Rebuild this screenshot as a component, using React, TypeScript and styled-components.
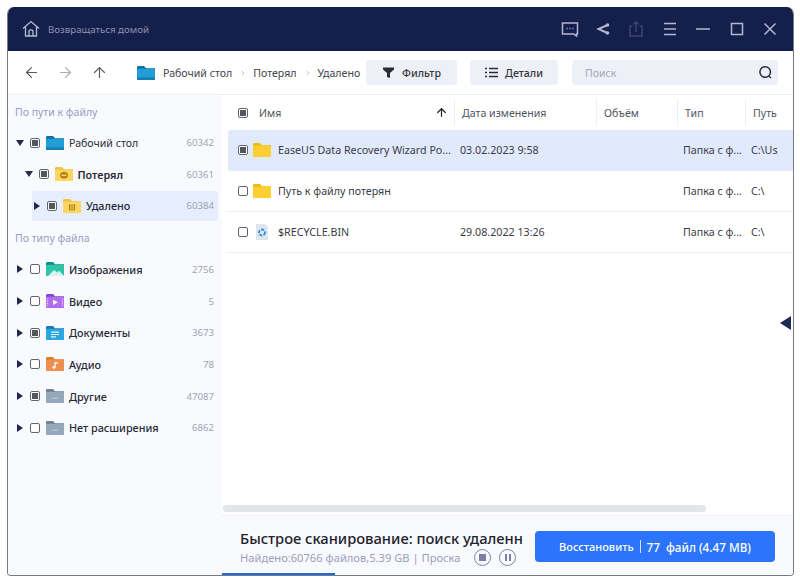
import styled, { createGlobalStyle } from 'styled-components';
import { ArrowLeft, ArrowRight, ArrowUp, ChevronRight } from 'lucide-react';

const GlobalStyle = createGlobalStyle`
  html, body {
    margin: 0;
    background: #fff;
    font-family: "Noto Sans", "Open Sans", sans-serif;
  }
  * { box-sizing: border-box; }
`;

const Window = styled.div`
  position: relative;
  width: 787px;
  height: 569px;
  margin: 7px 0 0 7px;
  display: flex;
  flex-direction: column;
  background: #fff;
  border: 1px solid #77797f;
  border-top: 0;
  border-radius: 7px 7px 4px 4px;
  overflow: hidden;
`;

const TitleBar = styled.header`
  height: 44px;
  flex: none;
  margin: 0 -1px;
  display: flex;
  align-items: center;
  justify-content: space-between;
  padding: 0 14px 0 15px;
  background: #151f4c;
`;

const HomeLink = styled.div`
  display: flex;
  align-items: center;
  gap: 8px;
  color: #8d92b3;
  font-size: 9.7px;
`;

const WindowTools = styled.div`
  display: flex;
  align-items: center;
  gap: 13.4px;
`;

const ToolIcon = styled.svg<{ $dim?: boolean; $bold?: boolean }>`
  width: 20px;
  height: 20px;
  fill: none;
  stroke: ${(p) => (p.$dim ? '#3d4670' : '#b3b7ce')};
  stroke-width: ${(p) => (p.$bold ? 2 : 1.5)};
  display: block;
`;

const Toolbar = styled.div`
  height: 44px;
  flex: none;
  display: flex;
  align-items: center;
  padding: 0 15px 0 15px;
  border-bottom: 1px solid #edeff5;
`;

const NavButtons = styled.div`
  display: flex;
  align-items: center;
  gap: 17px;
  margin-right: 29px;
`;

const NavArrow = styled.span<{ $off?: boolean }>`
  display: flex;
  color: ${(p) => (p.$off ? '#a9acb5' : '#555861')};
`;

const Crumbs = styled.div`
  display: flex;
  align-items: center;
  width: 229px;
  font-size: 10.6px;
  color: #41434d;
`;

const CrumbFolder = styled.span`
  display: flex;
  margin-right: 8px;
`;

const CrumbArrow = styled.span`
  display: flex;
  color: #a5a8b3;
  margin: 0 6px 0 7px;
`;

const ToolButton = styled.div<{ $w: number }>`
  width: ${(p) => p.$w}px;
  height: 25px;
  margin-right: 13px;
  display: flex;
  align-items: center;
  justify-content: center;
  gap: 7px;
  background: #eef0f8;
  border-radius: 4px;
  color: #33353f;
  font-size: 10.6px;
  font-weight: 500;
`;

const SearchBox = styled.div`
  width: 206px;
  height: 25px;
  margin-left: 1px;
  display: flex;
  align-items: center;
  justify-content: space-between;
  padding: 0 5px 0 13px;
  background: #eef0f8;
  border-radius: 4px;
  color: #a3a6b4;
  font-size: 10.5px;
`;

const Body = styled.div`
  flex: 1;
  min-height: 0;
  display: flex;
`;

const Sidebar = styled.aside`
  width: 214px;
  flex: none;
  padding: 7px 0 0 0;
  background: #f9fafe;
`;

const SideLabel = styled.div`
  height: 20px;
  margin: 0 0 0 7px;
  display: flex;
  align-items: center;
  color: #9a9cc0;
  font-size: 10.5px;
`;

const TreeList = styled.div`
  display: flex;
  flex-direction: column;
  margin: 5px 0 6px;
`;

const TypeList = styled(TreeList)`
  margin-top: 6px;
`;

const TreeRow = styled.div<{ $level: number; $active?: boolean; $h: number }>`
  position: relative;
  height: ${(p) => p.$h}px;
  display: flex;
  align-items: center;
  margin-right: 4px;
  padding-left: ${(p) => 8 + p.$level * 8.5}px;
  padding-right: 3px;
  color: #272a36;
  &::before {
    content: '';
    display: ${(p) => (p.$active ? 'block' : 'none')};
    position: absolute;
    left: 24px;
    right: 0;
    top: 1px;
    bottom: 1px;
    background: #e6edfd;
    border-radius: 3px;
  }
  & > * { position: relative; }
`;

const TreeName = styled.span<{ $weight: number }>`
  font-size: ${(p) => (p.$weight === 400 ? 10.6 : 10.8)}px;
  font-weight: ${(p) => p.$weight};
`;

const Caret = styled.span<{ $open?: boolean }>`
  width: 0;
  height: 0;
  margin-right: 6px;
  margin-left: ${(p) => (p.$open ? '0' : '1px')};
  ${(p) =>
    p.$open
      ? `border-left: 4px solid transparent;
         border-right: 4px solid transparent;
         border-top: 6px solid #1f2a4f;`
      : `border-top: 4px solid transparent;
         border-bottom: 4px solid transparent;
         border-left: 6px solid #1f2a4f;
         margin-right: 7px;`}
`;

const Check = styled.span<{ $on?: boolean }>`
  width: 10px;
  height: 10px;
  flex: none;
  display: flex;
  align-items: center;
  justify-content: center;
  background: #fff;
  border: 1px solid #63656e;
  border-radius: 2px;
  &::after {
    content: '';
    display: ${(p) => (p.$on ? 'block' : 'none')};
    width: 6px;
    height: 6px;
    background: #55575f;
  }
`;

const TreeIcon = styled.span`
  display: flex;
  margin: 0 5px 0 6px;
`;

const Count = styled.span`
  margin-left: auto;
  padding-right: 1px;
  color: #a0a3b2;
  font-size: 9.6px;
`;

const Main = styled.main`
  flex: 1;
  min-width: 0;
  display: flex;
  flex-direction: column;
`;

const Table = styled.div`
  flex: 1;
  min-height: 0;
  padding-left: 6px;
  overflow: hidden;
`;

const HeaderRow = styled.div`
  height: 35px;
  display: grid;
  grid-template-columns: 227px 142px 81px 68px 33px;
  color: #51535e;
  font-size: 10.6px;
`;

const HeadCell = styled.div`
  display: flex;
  align-items: center;
  justify-content: space-between;
  padding: 0 6px 0 7px;
  border-right: 1px solid #eef0f4;
  margin: 4px 0;
  white-space: nowrap;
  &:last-child { border-right: 0; padding-right: 0; }
`;

const NameHead = styled(HeadCell)`
  padding-left: 10px;
  padding-right: 6px;
`;

const NameLabel = styled.span`
  display: flex;
  align-items: center;
  gap: 11px;
`;

const DataRow = styled.div<{ $active?: boolean }>`
  height: 41px;
  display: grid;
  grid-template-columns: 227px 142px 81px 68px 33px;
  align-items: center;
  border-bottom: 1px solid ${(p) => (p.$active ? 'transparent' : '#edeff3')};
  background: ${(p) => (p.$active ? '#e1e9fd' : 'transparent')};
  border-radius: ${(p) => (p.$active ? '3px 0 0 3px' : '0')};
  color: #3a3c47;
  font-size: 10.7px;
  white-space: nowrap;
`;

const NameCell = styled.div`
  display: flex;
  align-items: center;
  padding-left: 10px;
  min-width: 0;
`;

const RowIcon = styled.span`
  display: flex;
  margin: 0 7px 0 5px;
`;

const RowName = styled.span`
  overflow: hidden;
  text-overflow: ellipsis;
`;

const Cell = styled.div`
  padding-left: 5px;
  overflow: hidden;
`;

const HScroll = styled.div`
  height: 7px;
  flex: none;
  width: 483px;
  margin: 0 0 3px 1px;
  background: #e2e5e9;
  border-radius: 4px;
`;

const Footer = styled.footer`
  position: relative;
  height: 60px;
  flex: none;
  display: flex;
  align-items: flex-start;
  padding: 15px 18px 0 18px;
  background: #f9fafe;
  border-top: 1px solid #edeff5;
`;

const ScanInfo = styled.div`
  width: 295px;
  flex: none;
`;

const ScanTitle = styled.div`
  color: #20222c;
  font-size: 14.7px;
  font-weight: 500;
  line-height: 14px;
  white-space: nowrap;
`;

const ScanMeta = styled.div`
  display: flex;
  align-items: center;
  margin-top: 4px;
  color: #9b9eb8;
  font-size: 11.15px;
  white-space: nowrap;
`;

const MetaText = styled.span`
  width: 234px;
  overflow: hidden;
`;

const RoundButton = styled.span`
  width: 17px;
  height: 17px;
  margin: 0 8px 0 0;
  flex: none;
  display: flex;
  align-items: center;
  justify-content: center;
  gap: 2px;
  border: 1px solid #7d80a6;
  border-radius: 50%;
`;

const StopMark = styled.span`
  width: 7px;
  height: 7px;
  background: #7d80a6;
`;

const PauseMark = styled.span`
  width: 2px;
  height: 7px;
  background: #7d80a6;
`;

const RecoverButton = styled.button`
  width: 240px;
  height: 31px;
  flex: none;
  display: flex;
  align-items: center;
  justify-content: center;
  gap: 6px;
  border: 0;
  border-radius: 4px;
  background: #2b74fb;
  color: #fff;
  font-family: inherit;
  font-size: 11px;
  font-weight: 500;
`;

const ButtonDivider = styled.span`
  width: 1px;
  height: 13px;
  background: #d5e3ff;
`;

const ButtonCount = styled.span`
  font-size: 11.7px;
`;

const Progress = styled.div`
  position: absolute;
  left: 0;
  bottom: 0;
  width: 113px;
  height: 2px;
  background: #1f68e0;
`;

const CollapseHandle = styled.span`
  position: absolute;
  right: 2px;
  top: 309px;
  width: 0;
  height: 0;
  border-top: 7px solid transparent;
  border-bottom: 7px solid transparent;
  border-right: 11px solid #1d2a52;
`;

function FolderGlyph({ kind }: { kind: string }) {
  const palette: Record<string, [string, string]> = {
    desktop: ['#0f6fa8', '#1f9fd6'],
    lost: ['#f0c24a', '#fbd660'],
    deleted: ['#f0c24a', '#fbd660'],
    image: ['#0f8f7f', '#2fc4a8'],
    video: ['#8a45d0', '#b26cf0'],
    docs: ['#1777b8', '#2ba6de'],
    audio: ['#d9822f', '#ee8f4f'],
    other: ['#6f7f96', '#96a8bd'],
    plain: ['#f2b90f', '#fdcf33'],
  };
  const [back, front] = palette[kind];
  return (
    <svg width="18" height="14" viewBox="0 0 18 16" preserveAspectRatio="none">
      <path d="M0 1.5C0 .7.7 0 1.5 0H7l2 2.5h9V5H0z" fill={back} />
      <rect x="0" y="3" width="18" height="13" rx="1" fill={front} />
      {kind === 'desktop' && <rect x="0" y="13" width="18" height="3" fill="#0d6397" opacity="0.55" />}
      {kind === 'lost' && (
        <>
          <circle cx="9" cy="9.5" r="4" fill="#b8860f" />
          <rect x="6.5" y="8.8" width="5" height="1.5" fill="#fbd660" />
        </>
      )}
      {kind === 'deleted' && (
        <path d="M5.5 7h7M6.5 7v5.500h5V7M8.200 8.500v2.500M9.800 8.500v2.500" stroke="#a9780c" strokeWidth="1" fill="none" />
      )}
      {kind === 'image' && <path d="M2 16l6-7 3 3 2-2 5 6z" fill="#d5f5ee" />}
      {kind === 'video' && (
        <>
          <path d="M7 6.500l5 3-5 3z" fill="#fff" />
          <path d="M1.500 5v9M16.500 5v9" stroke="#e4ccfb" strokeWidth="1.400" strokeDasharray="1.400 1.200" />
        </>
      )}
      {kind === 'docs' && <path d="M5 7h8M5 9.700h8M5 12.400h5" stroke="#e4f5fd" strokeWidth="1.300" />}
      {kind === 'audio' && (
        <>
          <path d="M9 6v6M9 6.200l3 .8" stroke="#fff" strokeWidth="1.300" fill="none" />
          <circle cx="7.800" cy="12" r="1.500" fill="#fff" />
        </>
      )}
      {kind === 'other' && <path d="M6 10.500h1.200M8.400 10.500h1.200M10.800 10.500H12" stroke="#e5ecf3" strokeWidth="1.200" />}
    </svg>
  );
}

function RecycleGlyph() {
  return (
    <svg width="18" height="18" viewBox="0 0 18 18">
      <path d="M3 1h9l3 3v13H3z" fill="#dfe5ec" />
      <circle cx="9" cy="9.500" r="3" fill="none" stroke="#2a8fdc" strokeWidth="1.800" strokeDasharray="3 1.300" />
    </svg>
  );
}

const pathTree = [
  { name: 'Рабочий стол', count: '60342', level: 0, kind: 'desktop', open: true, on: true, weight: 400 },
  { name: 'Потерял', count: '60361', level: 1, kind: 'lost', open: true, on: true, weight: 600 },
  { name: 'Удалено', count: '60384', level: 2, kind: 'deleted', on: true, active: true, weight: 500 },
];

const typeTree = [
  { name: 'Изображения', count: '2756', kind: 'image' },
  { name: 'Видео', count: '5', kind: 'video' },
  { name: 'Документы', count: '3673', kind: 'docs', on: true },
  { name: 'Аудио', count: '78', kind: 'audio' },
  { name: 'Другие', count: '47087', kind: 'other', on: true },
  { name: 'Нет расширения', count: '6862', kind: 'other' },
];

const files = [
  { name: 'EaseUS Data Recovery Wizard Po...', date: '03.02.2023 9:58', path: 'C:\\Us', on: true, kind: 'plain' },
  { name: 'Путь к файлу потерян', date: '', path: 'C:\\', kind: 'plain' },
  { name: '$RECYCLE.BIN', date: '29.08.2022 13:26', path: 'C:\\', kind: 'bin' },
];

export default function App() {
  return (
    <>
      <GlobalStyle />
      <Window>
        <TitleBar>
          <HomeLink>
            <svg width="18" height="18" viewBox="0 0 18 18" fill="none" stroke="#b7bbd0" strokeWidth="1.300">
              <path d="M1 8.500L9 1.500l8 7M3.500 7v9h11V7" />
              <path d="M7 16v-4.500c0-1 .9-1.700 2-1.700s2 .7 2 1.700V16" />
            </svg>
            Возвращаться домой
          </HomeLink>
          <WindowTools>
            <ToolIcon viewBox="0 0 20 20">
              <path d="M2.500 4h15v11h-1v2l-3-2h-11z" />
              <path d="M6.500 9.500h1M9.500 9.500h1M12.500 9.500h1" />
            </ToolIcon>
            <ToolIcon viewBox="0 0 20 20" $bold>
              <path d="M14.500 6l-9 4 9 4" />
              <circle cx="14.500" cy="6" r=".8" />
              <circle cx="14.500" cy="14" r=".8" />
            </ToolIcon>
            <ToolIcon viewBox="0 0 20 20" $dim>
              <path d="M6.500 7H4v10h12V7h-2.500M10 13V3M7.500 5.200L10 3l2.500 2.200" />
            </ToolIcon>
            <ToolIcon viewBox="0 0 20 20">
              <path d="M4 4.500h12M4 10h12M4 15.500h12" />
            </ToolIcon>
            <ToolIcon viewBox="0 0 20 20">
              <path d="M3 10h14" />
            </ToolIcon>
            <ToolIcon viewBox="0 0 20 20">
              <path d="M4.500 4.500h11v11h-11z" />
            </ToolIcon>
            <ToolIcon viewBox="0 0 20 20">
              <path d="M4.500 4.500l11 11M15.500 4.500l-11 11" />
            </ToolIcon>
          </WindowTools>
        </TitleBar>
        <Toolbar>
          <NavButtons>
            <NavArrow>
              <ArrowLeft size={17} strokeWidth={1.6} />
            </NavArrow>
            <NavArrow $off>
              <ArrowRight size={17} strokeWidth={1.6} />
            </NavArrow>
            <NavArrow>
              <ArrowUp size={17} strokeWidth={1.6} />
            </NavArrow>
          </NavButtons>
          <Crumbs>
            <CrumbFolder>
              <FolderGlyph kind="desktop" />
            </CrumbFolder>
            Рабочий стол
            <CrumbArrow>
              <ChevronRight size={8} strokeWidth={2} />
            </CrumbArrow>
            Потерял
            <CrumbArrow>
              <ChevronRight size={8} strokeWidth={2} />
            </CrumbArrow>
            Удалено
          </Crumbs>
          <ToolButton $w={91}>
            <svg width="13" height="13" viewBox="0 0 13 13">
              <path d="M1 1.500h11v2L8 7v5L5 11V7L1 3.500z" fill="#2b2d36" />
            </svg>
            Фильтр
          </ToolButton>
          <ToolButton $w={88}>
            <svg width="13" height="13" viewBox="0 0 13 13" stroke="#2b2d36" strokeWidth="1.300">
              <path d="M0 2.500h2M4 2.500h9M0 6.500h2M4 6.500h9M0 10.500h2M4 10.500h9" />
            </svg>
            Детали
          </ToolButton>
          <SearchBox>
            Поиск
            <svg width="15" height="15" viewBox="0 0 15 15" fill="none" stroke="#2b2d36" strokeWidth="1.500">
              <circle cx="7.200" cy="7" r="5.300" />
              <path d="M10.500 11l2.500 2" />
            </svg>
          </SearchBox>
        </Toolbar>
        <Body>
          <Sidebar>
            <SideLabel>По пути к файлу</SideLabel>
            <TreeList>
              {pathTree.map((item) => (
                <TreeRow key={item.name} $level={item.level} $active={item.active} $h={31.5}>
                  <Caret $open={item.open} />
                  <Check $on={item.on} />
                  <TreeIcon>
                    <FolderGlyph kind={item.kind} />
                  </TreeIcon>
                  <TreeName $weight={item.weight}>{item.name}</TreeName>
                  <Count>{item.count}</Count>
                </TreeRow>
              ))}
            </TreeList>
            <SideLabel>По типу файла</SideLabel>
            <TypeList>
              {typeTree.map((item) => (
                <TreeRow key={item.name} $level={0} $h={31.7}>
                  <Caret />
                  <Check $on={item.on} />
                  <TreeIcon>
                    <FolderGlyph kind={item.kind} />
                  </TreeIcon>
                  <TreeName $weight={500}>{item.name}</TreeName>
                  <Count>{item.count}</Count>
                </TreeRow>
              ))}
            </TypeList>
          </Sidebar>
          <Main>
            <Table>
              <HeaderRow>
                <NameHead>
                  <NameLabel>
                    <Check $on />
                    Имя
                  </NameLabel>
                  <ArrowUp size={13} strokeWidth={2.2} color="#22242c" />
                </NameHead>
                <HeadCell>Дата изменения</HeadCell>
                <HeadCell>Объём</HeadCell>
                <HeadCell>Тип</HeadCell>
                <HeadCell>Путь</HeadCell>
              </HeaderRow>
              {files.map((file) => (
                <DataRow key={file.name} $active={file.on}>
                  <NameCell>
                    <Check $on={file.on} />
                    <RowIcon>{file.kind === 'bin' ? <RecycleGlyph /> : <FolderGlyph kind="plain" />}</RowIcon>
                    <RowName>{file.name}</RowName>
                  </NameCell>
                  <Cell>{file.date}</Cell>
                  <Cell />
                  <Cell>Папка с ф...</Cell>
                  <Cell>{file.path}</Cell>
                </DataRow>
              ))}
            </Table>
            <HScroll />
            <Footer>
              <ScanInfo>
                <ScanTitle>Быстрое сканирование: поиск удаленн</ScanTitle>
                <ScanMeta>
                  <MetaText>Найдено:60766 файлов,5.39 GB | Проска</MetaText>
                  <RoundButton>
                    <StopMark />
                  </RoundButton>
                  <RoundButton>
                    <PauseMark />
                    <PauseMark />
                  </RoundButton>
                </ScanMeta>
              </ScanInfo>
              <RecoverButton>
                Восстановить
                <ButtonDivider />
                <ButtonCount>77&nbsp; файл (4.47 MB)</ButtonCount>
              </RecoverButton>
              <Progress />
            </Footer>
          </Main>
        </Body>
        <CollapseHandle />
      </Window>
    </>
  );
}
